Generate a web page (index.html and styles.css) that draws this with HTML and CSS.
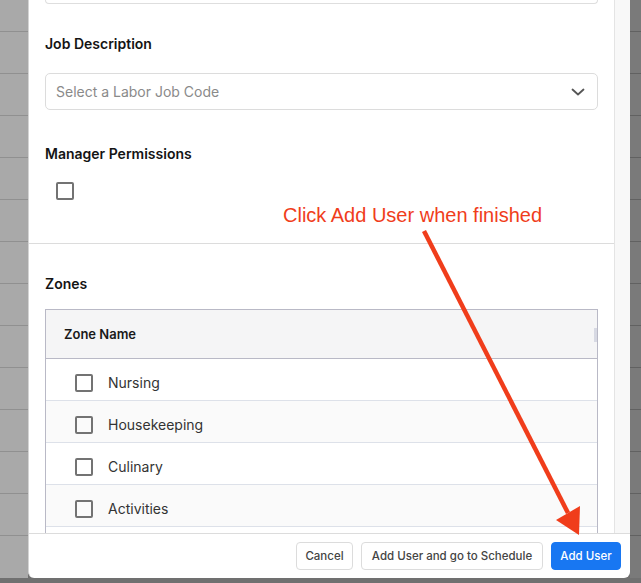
FILE: index.html
```html
<!DOCTYPE html>
<html>
<head>
<meta charset="utf-8">
<link rel="stylesheet" href="styles.css">
</head>
<body>
<div class="page">
  <div class="strip strip-left"></div>
  <div class="modal">
    <div class="modal-scroll">
      <div class="modal-content">
        <section class="section section-top">
          <div class="input-tail"></div>
          <div class="label label-job">Job Description</div>
          <div class="select">
            <span class="placeholder">Select a Labor Job Code</span>
            <svg class="chevron" width="14" height="8" viewBox="0 0 14 8"><path d="M1.5 1.5 L7 6.5 L12.5 1.5" fill="none" stroke="#555" stroke-width="1.8" stroke-linecap="round" stroke-linejoin="round"/></svg>
          </div>
          <div class="label label-mgr">Manager Permissions</div>
          <span class="checkbox checkbox-mgr"></span>
        </section>
        <section class="section section-zones">
          <div class="label label-zones">Zones</div>
          <div class="table">
            <div class="thead"><span class="th">Zone Name</span><span class="th-thumb"></span></div>
            <div class="row"><span class="checkbox"></span><span class="row-text">Nursing</span></div>
            <div class="row row-alt"><span class="checkbox"></span><span class="row-text">Housekeeping</span></div>
            <div class="row"><span class="checkbox"></span><span class="row-text">Culinary</span></div>
            <div class="row row-alt"><span class="checkbox"></span><span class="row-text">Activities</span></div>
            <div class="row"></div>
          </div>
        </section>
      </div>
      <div class="scroll-track"></div>
    </div>
    <div class="modal-footer">
      <button class="btn btn-cancel">Cancel</button>
      <button class="btn btn-schedule">Add User and go to Schedule</button>
      <button class="btn btn-primary">Add User</button>
    </div>
  </div>
  <div class="strip strip-right"></div>

  <div class="annotation-text">Click Add User when finished</div>
  <svg class="annotation-arrow" width="641" height="583" viewBox="0 0 641 583">
    <line x1="424" y1="231" x2="568" y2="513" stroke="#f03d1b" stroke-width="4.5"/>
    <polygon points="556,520 580,506 579,535" fill="#f03d1b"/>
  </svg>
</div>
</body>
</html>
```

FILE: styles.css
```css
* { box-sizing: border-box; }

html, body {
  margin: 0;
  padding: 0;
}

body {
  font-family: "Inter", "Noto Sans", sans-serif;
  background: #6e6e6e;
}

.page {
  position: relative;
  width: 641px;
  height: 583px;
  overflow: hidden;
  display: grid;
  grid-template-columns: 28px 602px 11px;
  background: #707070;
}

.strip {
  height: 578px;
  background-position: 0 -10px;
}

.strip-left {
  background-color: #a9a9a9;
  background-image: repeating-linear-gradient(to bottom, transparent 0 41px, #909090 41px 42px);
}

.strip-right {
  background-color: #7a7a7a;
  background-image: repeating-linear-gradient(to bottom, transparent 0 41px, #616161 41px 42px);
}

.modal {
  height: 578px;
  background: #fff;
  border-left: 1px solid #d4d4d4;
  border-radius: 0 0 6px 6px;
  display: flex;
  flex-direction: column;
  overflow: hidden;
}

.modal-scroll {
  flex: 1;
  display: flex;
  overflow: hidden;
}

.modal-content {
  width: 585px;
  flex: none;
}

.scroll-track {
  flex: 1;
  background: #f8f8f8;
  border-left: 1px solid #e4e4e4;
}

.section {
  padding: 0 16px;
}

.section-top {
  padding-bottom: 43px;
  border-bottom: 1px solid #dcdcdc;
}

.input-tail {
  height: 4px;
  border: 1px solid #dedede;
  border-top: none;
  border-radius: 0 0 5px 5px;
}

.label {
  font-size: 14px;
  font-weight: 600;
  line-height: 20px;
  color: #141414;
}

.label-job { margin-top: 30px; }
.label-mgr { margin-top: 34px; }
.label-zones { margin-top: 30px; }

.select {
  margin-top: 19px;
  height: 37px;
  border: 1px solid #dcdcdc;
  border-radius: 5px;
  display: flex;
  align-items: center;
  justify-content: space-between;
  padding: 0 12px 0 10px;
}

.placeholder {
  font-size: 14px;
  color: #8a8a8a;
}

.checkbox {
  display: block;
  width: 18px;
  height: 18px;
  border: 2px solid #737373;
  border-radius: 2px;
  flex: none;
}

.checkbox-mgr {
  margin-top: 18px;
  margin-left: 11px;
}

.table {
  margin-top: 15px;
  border: 1px solid #b9b9c6;
  border-bottom: none;
}

.thead {
  height: 49px;
  background: #f5f5f6;
  border-bottom: 1px solid #b9b9c6;
  display: flex;
  align-items: center;
  justify-content: space-between;
  padding-left: 18px;
}

.th {
  font-size: 13px;
  font-weight: 600;
  color: #1a1a1a;
}

.th-thumb {
  width: 3px;
  height: 14px;
  background: #d7d9e3;
  margin-top: 2px;
}

.row {
  height: 42px;
  border-bottom: 1px solid #dde1e9;
  display: flex;
  align-items: flex-start;
  padding-top: 15px;
  padding-left: 29px;
  background: #fff;
}

.row-alt {
  background: #fafafa;
}

.row-text {
  margin-left: 15px;
  font-size: 14px;
  line-height: 18px;
  color: #333;
}

.modal-footer {
  height: 45px;
  flex: none;
  border-top: 1px solid #dcdcdc;
  display: flex;
  justify-content: flex-end;
  align-items: flex-start;
  gap: 8px;
  padding: 8px 9px 0 0;
}

.btn {
  height: 28px;
  padding: 0;
  border: 1px solid #dcdcdc;
  border-radius: 4px;
  background: #fff;
  font-family: "Inter", "Noto Sans", sans-serif;
  font-size: 11.5px;
  font-weight: 500;
  color: #444;
  text-align: center;
}

.btn-cancel { width: 57px; }
.btn-schedule { width: 182px; }

.btn-primary {
  width: 70px;
  background: #1877f2;
  border-color: #1877f2;
  color: #fff;
}

.annotation-text {
  position: absolute;
  left: 283px;
  top: 203px;
  font-family: "Liberation Sans", Arial, sans-serif;
  font-size: 20px;
  line-height: 24px;
  color: #f03d1b;
  white-space: nowrap;
}

.annotation-arrow {
  position: absolute;
  left: 0;
  top: 0;
  pointer-events: none;
}
```
